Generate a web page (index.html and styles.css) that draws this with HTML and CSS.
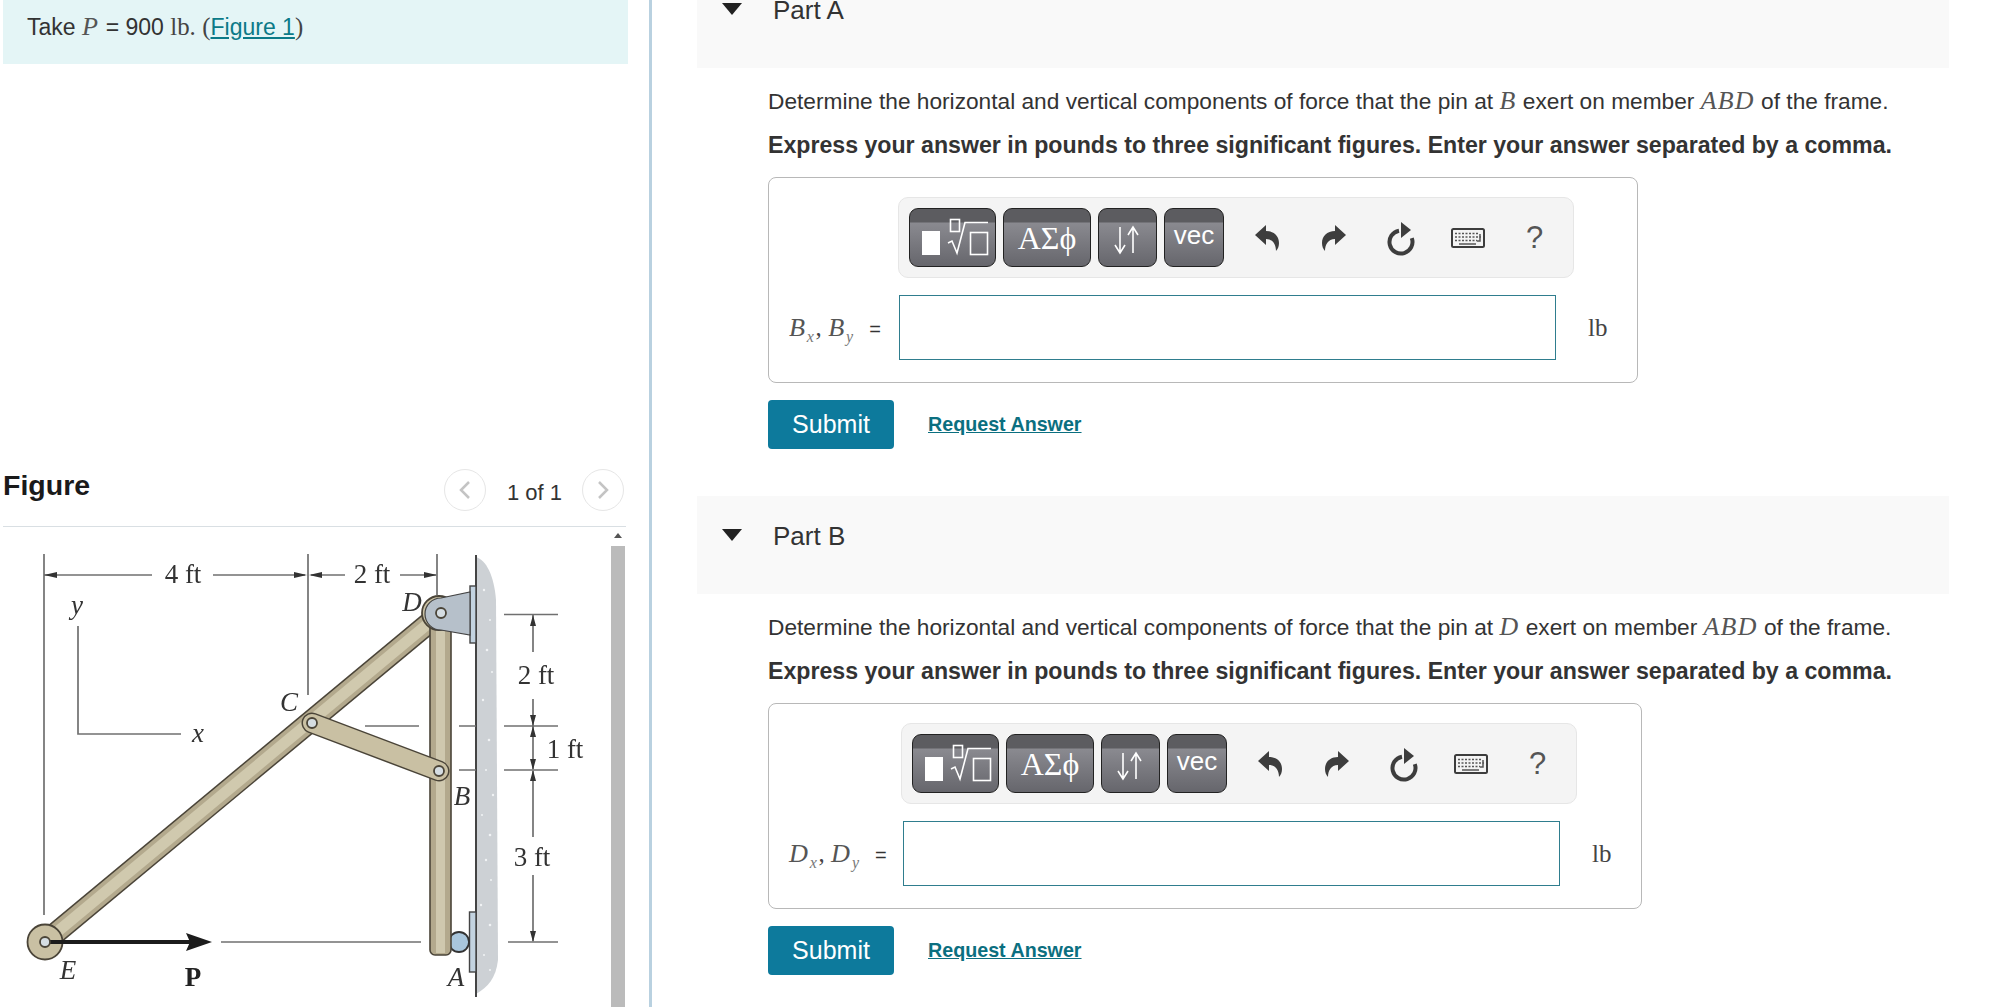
FILE: index.html
```html
<!DOCTYPE html>
<html lang="en">
<head>
<meta charset="utf-8">
<title>Frame problem</title>
<link rel="stylesheet" href="styles.css">
</head>
<body>
<svg class="defs" width="0" height="0" aria-hidden="true">
  <symbol id="i-undo" viewBox="0 0 24 26"><path d="M0 10 L11 0 V6 C19 6 24 11 24 18 C24 21 23 24 21 26 C21 20 18 14 11 14 V20 Z"/></symbol>
  <symbol id="i-reload" viewBox="0 0 32 36">
    <path class="ic-stroke" d="M26.800 18.100 A11.500 11.500 0 1 1 14 10.700"/>
    <path d="M16 2 L26 10 L16 18 Z"/>
  </symbol>
  <symbol id="i-kbd" viewBox="0 0 34 20">
    <rect class="ic-kbd" x="1" y="1" width="32" height="18" rx="1.5"/>
    <path class="ic-keys" d="M4 5.500H27M4 9H30M4 12.500H26"/>
    <path class="ic-bar" d="M8 16H25M29 6V13H26"/>
  </symbol>
  <symbol id="i-math" viewBox="0 0 87 59">
    <rect class="m-fill" x="13" y="23" width="18" height="24"/>
    <rect class="m-line" x="41.500" y="11.500" width="9" height="12"/>
    <path class="m-line" d="M39 35 L43 33 L48 45 L56 14.500 H79"/>
    <rect class="m-line" x="61.500" y="24.500" width="17" height="22"/>
  </symbol>
  <symbol id="i-arrows" viewBox="0 0 59 59">
    <path class="m-line" d="M22 19V44M17 37L22 45L27 37M35 45V19M30 27L35 19L40 27"/>
  </symbol>
</svg>
<div class="page">
  <aside class="left">
    <div class="intro">Take <i class="m">P</i> = 900 <span class="r">lb.</span> <span class="r">(</span><a href="#fig">Figure 1</a><span class="r">)</span></div>
    <div class="fig-head" id="fig">
      <h2>Figure</h2>
      <nav class="pager">
        <span class="circle"><svg width="14" height="22" viewBox="0 0 14 22"><path d="M11 3L3 11L11 19"/></svg></span>
        <span class="count">1 of 1</span>
        <span class="circle"><svg width="14" height="22" viewBox="0 0 14 22"><path d="M3 3L11 11L3 19"/></svg></span>
      </nav>
    </div>
    <div class="fig-body">
      <svg class="drawing" width="608" height="480" viewBox="3 527 608 480">
        <g class="soft">
          <path class="wall" d="M476 557 C486 560 494 575 496 600 L498 960 C496 978 488 987 476 994 Z"/>
          <g class="speck">
            <circle cx="484" cy="590" r="1.200"/><circle cx="490" cy="620" r="1"/><circle cx="487" cy="650" r="1.300"/><circle cx="492" cy="672" r="1"/><circle cx="483" cy="700" r="1.200"/><circle cx="489" cy="740" r="1.300"/><circle cx="486" cy="770" r="1"/><circle cx="493" cy="795" r="1.200"/><circle cx="482" cy="815" r="1"/><circle cx="490" cy="835" r="1.300"/><circle cx="486" cy="860" r="1.200"/><circle cx="491" cy="880" r="1"/><circle cx="481" cy="905" r="1.200"/><circle cx="490" cy="925" r="1.300"/><circle cx="484" cy="955" r="1"/><circle cx="490" cy="970" r="1"/>
          </g>
          <path class="line dark" d="M476 555V997"/>
          <path class="line" d="M44 554V915M308 554V695M437 554V595M78 626V734H181"/>
          <path class="line" d="M44 575H152M213 575H305M311 575H345M400 575H436"/>
          <path class="head" d="M44 575l13-3v6zM307 575l-13-3v6zM309 575l13-3v6zM437 575l-13-3v6z"/>
          <path class="line" d="M504 614.500H558M504 726H558M504 770H558M508 942H558M365 726H419M459 726H476M459 770H476M221 942H421"/>
          <path class="line" d="M533 615V652M533 699V769M533 771V837M533 875V941"/>
          <path class="head" d="M533 615l-3 11h6zM533 726l-3-11h6zM533 726l-3 11h6zM533 770l-3-11h6zM533 770l-3 11h6zM533 942l-3-11h6z"/>

          <rect class="plate" x="470" y="586" width="6" height="57"/>
          <rect class="plate" x="469.500" y="912" width="6.500" height="60"/>
          <circle class="roller" cx="459" cy="942" r="10"/>

          <path class="bar-o" d="M45 942L441 613"/>
          <path class="bar-f" d="M45 942L441 613"/>
          <path class="bar-h" d="M45 942L441 613"/>

          <rect class="post-o" x="430" y="622" width="21" height="333" rx="5"/>
          <rect class="post-f" x="436" y="622" width="9" height="331"/>

          <circle class="hub" cx="439" cy="613" r="17"/>
          <path class="bracket" d="M441 598 L470 592 V635 L441 630 A16 16 0 0 1 441 598 Z"/>
          <circle class="hole" cx="441" cy="613" r="5"/>

          <path class="link-o" d="M312 723L439 771"/>
          <path class="link-f" d="M312 723L439 771"/>
          <circle class="hole" cx="312" cy="723" r="5"/>
          <circle class="hole" cx="439" cy="771" r="5"/>

          <circle class="hub" cx="45" cy="942" r="17.500"/>
          <path class="force" d="M45 942H192"/>
          <path class="force-head" d="M212 942L186 933L190 942L186 951Z"/>
          <circle class="hole" cx="45" cy="942" r="5"/>

          <text class="dim-t" x="183" y="583">4 ft</text>
          <text class="dim-t" x="372" y="583">2 ft</text>
          <text class="dim-t" x="536" y="684">2 ft</text>
          <text class="dim-t" x="565" y="758">1 ft</text>
          <text class="dim-t" x="532" y="866">3 ft</text>
          <text class="var" x="77" y="614">y</text>
          <text class="var" x="198" y="742">x</text>
          <text class="var" x="289" y="711">C</text>
          <text class="var" x="412" y="611">D</text>
          <text class="var" x="462" y="805">B</text>
          <text class="var" x="68" y="979">E</text>
          <text class="var" x="456" y="986">A</text>
          <text class="bold" x="193" y="986">P</text>
        </g>
      </svg>
      <div class="scrollbar"><span class="sb-arrow"></span><span class="sb-thumb"></span></div>
    </div>
  </aside>

  <main class="right">
    <section class="part">
      <header class="part-head"><span class="tri"></span><h3>Part A</h3></header>
      <div class="part-body">
        <p class="prompt">Determine the horizontal and vertical components of force that the pin at <i class="m">B</i> exert on member <i class="m">ABD</i> of the frame.</p>
        <p class="prompt strong">Express your answer in pounds to three significant figures. Enter your answer separated by a comma.</p>
        <div class="answer">
          <div class="toolbar">
            <span class="btn w87"><svg class="btn-svg" width="87" height="59"><use href="#i-math"/></svg></span>
            <span class="btn w88 greek">ΑΣϕ</span>
            <span class="btn w59"><svg class="btn-svg" width="59" height="59"><use href="#i-arrows"/></svg></span>
            <span class="btn w60 vec">vec</span>
            <div class="tools">
              <span class="tool"><svg width="24" height="26"><use href="#i-undo"/></svg></span>
              <span class="tool"><svg class="flip" width="24" height="26"><use href="#i-undo"/></svg></span>
              <span class="tool"><svg width="32" height="36"><use href="#i-reload"/></svg></span>
              <span class="tool"><svg width="34" height="20"><use href="#i-kbd"/></svg></span>
              <span class="tool help">?</span>
            </div>
          </div>
          <div class="row">
            <span class="label"><i class="m">B<sub>x</sub></i><span class="r">,</span> <i class="m">B<sub>y</sub></i> <span class="eq">=</span></span>
            <input class="field" type="text" aria-label="Bx, By">
            <span class="unit">lb</span>
          </div>
        </div>
        <div class="actions"><button class="submit" type="button">Submit</button><a class="req" href="#a">Request Answer</a></div>
      </div>
    </section>

    <section class="part">
      <header class="part-head"><span class="tri"></span><h3>Part B</h3></header>
      <div class="part-body">
        <p class="prompt">Determine the horizontal and vertical components of force that the pin at <i class="m">D</i> exert on member <i class="m">ABD</i> of the frame.</p>
        <p class="prompt strong">Express your answer in pounds to three significant figures. Enter your answer separated by a comma.</p>
        <div class="answer wide">
          <div class="toolbar">
            <span class="btn w87"><svg class="btn-svg" width="87" height="59"><use href="#i-math"/></svg></span>
            <span class="btn w88 greek">ΑΣϕ</span>
            <span class="btn w59"><svg class="btn-svg" width="59" height="59"><use href="#i-arrows"/></svg></span>
            <span class="btn w60 vec">vec</span>
            <div class="tools">
              <span class="tool"><svg width="24" height="26"><use href="#i-undo"/></svg></span>
              <span class="tool"><svg class="flip" width="24" height="26"><use href="#i-undo"/></svg></span>
              <span class="tool"><svg width="32" height="36"><use href="#i-reload"/></svg></span>
              <span class="tool"><svg width="34" height="20"><use href="#i-kbd"/></svg></span>
              <span class="tool help">?</span>
            </div>
          </div>
          <div class="row">
            <span class="label"><i class="m">D<sub>x</sub></i><span class="r">,</span> <i class="m">D<sub>y</sub></i> <span class="eq">=</span></span>
            <input class="field" type="text" aria-label="Dx, Dy">
            <span class="unit">lb</span>
          </div>
        </div>
        <div class="actions"><button class="submit" type="button">Submit</button><a class="req" href="#b">Request Answer</a></div>
      </div>
    </section>
  </main>
</div>
</body>
</html>
```
FILE: styles.css
```css
* { box-sizing: border-box; }
html, body { margin: 0; height: 100%; overflow: hidden; background: #fff; }
body { font-family: "Liberation Sans", Arial, sans-serif; font-size: 23px; color: #333; }
.defs { position: absolute; }
.page { display: flex; height: 1007px; overflow: hidden; }

/* left column */
.left { width: 652px; flex: none; padding-left: 3px; border-right: 3px solid #b9d1e0; }
.intro { width: 625px; height: 64px; padding: 12px 24px 0; line-height: 30px; background: #e4f5f6; }
.intro a { color: #0b7a88; }
.m { font-family: "Liberation Serif", serif; font-style: italic; font-size: 1.14em; letter-spacing: .05em; color: #555; }
.r { font-family: "Liberation Serif", serif; font-size: 1.08em; color: #444; }
.fig-head { display: flex; align-items: center; width: 623px; height: 63px; margin-top: 400px; padding: 0 2px 11px 0; border-bottom: 1px solid #d9dfe3; }
.fig-head h2 { margin: 0; padding-bottom: 9px; font-size: 28.500px; line-height: 34px; color: #1a1a1a; }
.pager { display: flex; align-items: center; margin-left: auto; gap: 21px; }
.count { padding-top: 6px; font-size: 22px; width: 54px; white-space: nowrap; }
.circle { display: flex; align-items: center; justify-content: center; width: 42px; height: 42px; border: 1px solid #e6e6e6; border-radius: 50%; }
.circle path { fill: none; stroke: #c4c4c4; stroke-width: 2.500; }
.fig-body { display: flex; height: 480px; }
.drawing { flex: none; display: block; }
.scrollbar { display: flex; flex-direction: column; align-items: center; width: 14px; }
.sb-arrow { width: 0; height: 0; margin-top: 6px; border: 4px solid transparent; border-top: 0; border-bottom: 5px solid #555; }
.sb-thumb { flex: 1; width: 14px; margin-top: 8px; background: #bbb; }

/* drawing */
.soft { filter: blur(0.45px); }
.wall { fill: #cdd1d5; }
.speck circle { fill: #f1f3f5; }
.line { fill: none; stroke: #707070; stroke-width: 1.700; }
.dark { stroke: #444; stroke-width: 2; }
.head { fill: #333; }
.plate { fill: #c3d3e0; stroke: #444; stroke-width: 1.400; }
.roller { fill: #a9c6dc; stroke: #333; stroke-width: 1.800; }
.bar-o { stroke: #4a4438; stroke-width: 22; fill: none; }
.bar-f { stroke: #b3a98d; stroke-width: 19; fill: none; }
.bar-h { stroke: #d0c9ae; stroke-width: 11; fill: none; }
.post-o { fill: #b3a98d; stroke: #4a4438; stroke-width: 1.600; }
.post-f { fill: #cfc8ae; }
.hub { fill: #c9c0a3; stroke: #4a4438; stroke-width: 1.800; }
.bracket { fill: #b6c0ca; stroke: #444; stroke-width: 1.200; }
.hole { fill: #d5dde2; stroke: #4a4438; stroke-width: 1.800; }
.link-o { stroke: #4a4438; stroke-width: 21; stroke-linecap: round; fill: none; }
.link-f { stroke: #c9c0a3; stroke-width: 18; stroke-linecap: round; fill: none; }
.force { stroke: #1c1c1c; stroke-width: 4; fill: none; }
.force-head { fill: #1c1c1c; }
.dim-t, .var, .bold { font-family: "Liberation Serif", serif; font-size: 27px; fill: #333; text-anchor: middle; }
.var { font-style: italic; }
.bold { font-weight: 700; fill: #222; }

/* right column */
.right { flex: 1; min-width: 0; margin-top: -30px; padding: 0 47px 0 45px; }
.part-head { display: flex; align-items: center; height: 98px; padding: 0 0 19px 25px; background: #f9f9f9; }
.part-head h3 { margin: 0 0 0 31px; font-size: 26px; font-weight: 400; line-height: 30px; color: #333; }
.tri { width: 0; height: 0; margin-bottom: 1px; border-style: solid; border-width: 12px 10px 0; border-color: #222 transparent transparent; }
.part-body { padding: 18px 0 47px 71px; }
.prompt { margin: 0; height: 30px; line-height: 29px; font-size: 22.700px; white-space: nowrap; }
.strong { margin-top: 15px; font-size: 23.150px; font-weight: 700; }
.answer { width: 870px; margin-top: 16px; padding: 19px 20px 22px; border: 1px solid #b8b8b8; border-radius: 8px; }
.answer.wide { width: 874px; }
.toolbar { display: flex; gap: 7px; width: 676px; height: 81px; margin-left: 109px; padding: 10px; background: #f4f4f4; border: 1px solid #e6e6e6; border-radius: 10px; }
.wide .toolbar { margin-left: 112px; }
.btn { position: relative; flex: none; display: flex; align-items: center; justify-content: center; height: 59px; padding-top: 10px; border: 1px solid #222; border-radius: 9px; color: #fff; background: linear-gradient(#5c5c60 0, #5c5c60 13px, #8a8a90 14px, #66666c 100%); }
.w87 { width: 87px; padding: 0; }
.w88 { width: 88px; }
.w59 { width: 59px; padding: 0; }
.w60 { width: 60px; }
.btn-svg { display: block; margin: -1px; }
.greek { font-family: "Liberation Serif", serif; font-size: 32px; padding-top: 2px; }
.vec { font-size: 26px; padding-top: 0; padding-bottom: 4px; }
.m-fill { fill: #fff; }
.m-line { fill: none; stroke: #fff; stroke-width: 1.600; }
.tools { display: flex; margin-left: 2px; }
.tool { display: flex; align-items: center; justify-content: center; width: 67px; fill: #3d3d3d; }
.flip { transform: scaleX(-1); }
.ic-stroke { fill: none; stroke: #3d3d3d; stroke-width: 4; }
.ic-kbd { fill: #f4f4f4; stroke: #3d3d3d; stroke-width: 2; }
.ic-keys { fill: none; stroke: #555; stroke-width: 1.500; stroke-dasharray: 2 1.500; }
.ic-bar { fill: none; stroke: #555; stroke-width: 1.500; }
.help { font-size: 31px; color: #555; }
.row { display: flex; align-items: center; margin-top: 17px; }
.label { width: 110px; flex: none; white-space: nowrap; font-size: 23px; }
.wide .label { width: 114px; }
.label .m { letter-spacing: .07em; }
.label sub { font-size: 16px; line-height: 0; color: #777; letter-spacing: .1em; }
.eq { font-size: 20px; margin-left: 8px; }
.field { width: 657px; height: 65px; flex: none; background: #fff; border: 1.500px solid #2f7d8e; border-radius: 0; outline: 0; }
.unit { margin-left: 32px; font-family: "Liberation Serif", serif; font-size: 25px; color: #444; }
.actions { display: flex; align-items: center; gap: 34px; margin-top: 17px; }
.submit { width: 126px; height: 49px; padding: 0; border: 0; border-radius: 4px; background: #0d7a9c; color: #fff; font-family: "Liberation Sans", Arial, sans-serif; font-size: 25px; }
.req { color: #0b6f80; font-size: 19.700px; font-weight: 700; }
```
